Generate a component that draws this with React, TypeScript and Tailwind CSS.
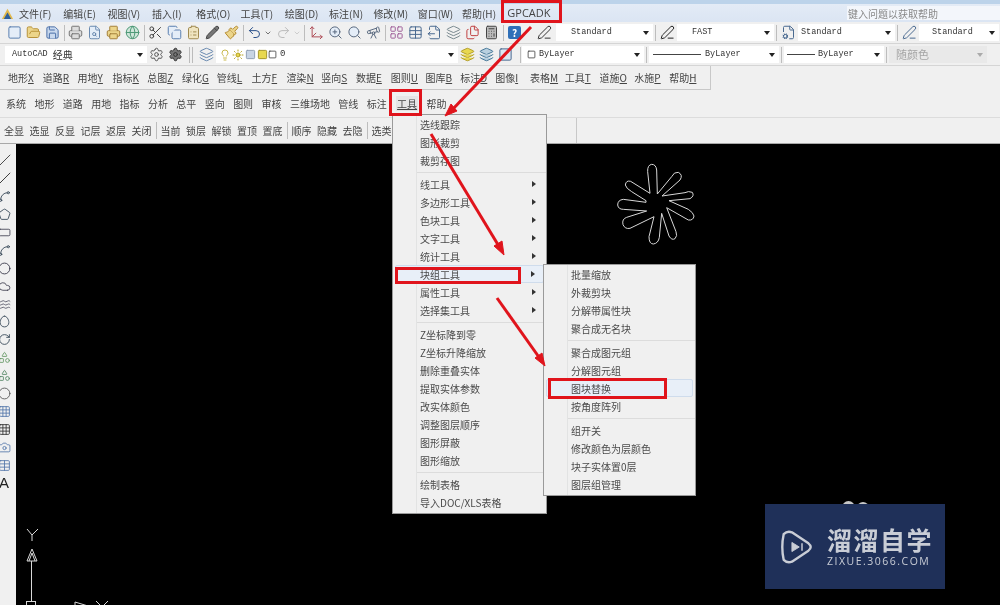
import {
  ChevronDown,
  Square,
  FolderOpen,
  Save,
  Printer,
  FileSearch,
  Globe,
  Scissors,
  Copy,
  ClipboardList,
  Pencil,
  Paintbrush,
  Undo2,
  Redo2,
  Move3d,
  ZoomIn,
  Search,
  Telescope,
  LayoutGrid,
  Table,
  FileOutput,
  Layers,
  Files,
  Calculator,
  Settings,
  Printer as Plot,
  Lightbulb,
  Sun,
  PenLine,
  FileCog,
  Slash,
  Spline,
  Pentagon,
  RectangleHorizontal,
  Circle,
  Cloud,
  Waves,
  Egg,
  Shapes,
  Grid3x3,
  Camera,
  RotateCw,
  type LucideIcon,
} from 'lucide-react';

const cjk = "font-['Noto_Sans_CJK_SC','Noto_Sans',sans-serif]";
const mono = "font-['Liberation_Mono','Noto_Sans_CJK_SC',monospace]";

const topMenu = ['文件(F)', '编辑(E)', '视图(V)', '插入(I)', '格式(O)', '工具(T)', '绘图(D)', '标注(N)', '修改(M)', '窗口(W)', '帮助(H)'];

const gpcad = [
  ['地形', 'X'], ['道路', 'R'], ['用地', 'Y'], ['指标', 'K'], ['总图', 'Z'], ['绿化', 'G'], ['管线', 'L'],
  ['土方', 'F'], ['渲染', 'N'], ['竖向', 'S'], ['数据', 'E'], ['图则', 'U'], ['图库', 'B'], ['标注', 'D'],
  ['图像', 'I'], ['表格', 'M'], ['工具', 'T'], ['道施', 'O'], ['水施', 'P'], ['帮助', 'H'],
];

const sysMenu = ['系统', '地形', '道路', '用地', '指标', '分析', '总平', '竖向', '图则', '审核', '三维场地', '管线', '标注'];

const layerGroups = [
  ['全显', '选显', '反显', '记层', '返层', '关闭'],
  ['当前', '锁层', '解锁', '置顶', '置底'],
  ['顺序', '隐藏', '去隐'],
  ['选类'],
];

type Item = { label: string; arrow?: boolean; active?: boolean };
type Entry = Item | 'sep';

const toolsMenu: Entry[] = [
  { label: '选线跟踪' }, { label: '图形裁剪' }, { label: '裁剪存图' }, 'sep',
  { label: '线工具', arrow: true }, { label: '多边形工具', arrow: true }, { label: '色块工具', arrow: true },
  { label: '文字工具', arrow: true }, { label: '统计工具', arrow: true }, { label: '块组工具', arrow: true, active: true },
  { label: '属性工具', arrow: true }, { label: '选择集工具', arrow: true }, 'sep',
  { label: 'Z坐标降到零' }, { label: 'Z坐标升降缩放' }, { label: '删除重叠实体' }, { label: '提取实体参数' },
  { label: '改实体颜色' }, { label: '调整图层顺序' }, { label: '图形屏蔽' }, { label: '图形缩放' }, 'sep',
  { label: '绘制表格' }, { label: '导入DOC/XLS表格' },
];

const blockMenu: Entry[] = [
  { label: '批量缩放' }, { label: '外裁剪块' }, { label: '分解带属性块' }, { label: '聚合成无名块' }, 'sep',
  { label: '聚合成图元组' }, { label: '分解图元组' }, { label: '图块替换', active: true }, { label: '按角度阵列' }, 'sep',
  { label: '组开关' }, { label: '修改颜色为层颜色' }, { label: '块子实体置0层' }, { label: '图层组管理' },
];

const drawTools: [LucideIcon, string][] = [
  [Slash, 'text-[#333]'], [Slash, 'text-[#222]'], [Spline, 'text-[#345]'], [Pentagon, 'text-[#345]'],
  [RectangleHorizontal, 'text-[#445]'], [Spline, 'text-[#345]'], [Circle, 'text-[#334]'], [Cloud, 'text-[#445]'],
  [Waves, 'text-[#556]'], [Egg, 'text-[#345]'], [RotateCw, 'text-[#345]'], [Shapes, 'text-[#696]'],
  [Shapes, 'text-[#586]'], [Circle, 'text-[#555]'], [Grid3x3, 'text-[#57a]'], [Grid3x3, 'text-[#333]'],
  [Camera, 'text-[#57a]'], [Table, 'text-[#57a]'],
];

function Tool({ icon: Icon, className }: { icon: LucideIcon; className: string }) {
  return (
    <div className="w-[19px] h-[20px] flex items-center justify-center shrink-0">
      <Icon size={15} strokeWidth={1.6} className={className} />
    </div>
  );
}

function Sep({ className = 'h-[16px] mx-[1.5px]' }: { className?: string }) {
  return <div className={`w-px bg-[#bdbdbd] shrink-0 ${className}`} />;
}

function Combo({ className, children, dark = true }: { className: string; children?: React.ReactNode; dark?: boolean }) {
  return (
    <div className={`h-[17px] bg-white flex items-center shrink-0 ${className}`}>
      <div className="flex-1 min-w-0 flex items-center overflow-hidden">{children}</div>
      <div className={`w-0 h-0 mr-[4px] border-x-[3.5px] border-x-transparent border-t-[4px] ${dark ? 'border-t-[#222]' : 'border-t-[#aaa]'}`} />
    </div>
  );
}

function MenuList({ items, className }: { items: Entry[]; className: string }) {
  return (
    <div className={`absolute z-10 bg-[#f0f0f0] border border-[#9a9a9a] pb-[2px] ${className}`}>
      <div className="absolute top-0 bottom-0 left-[23px] w-px bg-[#e2e3e3]" />
      {items.map((item, i) =>
        item === 'sep' ? (
          <div key={i} className="h-[6px] flex items-center pl-[24px]">
            <div className="h-px w-full bg-[#dcdcdc]" />
          </div>
        ) : (
          <div
            key={i}
            className={`relative h-[18px] mx-[2px] pl-[25px] pr-[8px] flex items-center justify-between text-[10px] text-[#4a4a4a] ${
              item.active ? 'bg-[#e8eff8] border border-[#cfdcec] rounded-[2px]' : ''
            }`}
          >
            <span className={item.active ? 'ml-[-1px]' : ''}>{item.label}</span>
            {item.arrow && <span className="w-0 h-0 border-y-[3.5px] border-y-transparent border-l-[4px] border-l-[#333]" />}
          </div>
        ),
      )}
    </div>
  );
}

export default function App() {
  return (
    <div className={`relative w-[1000px] h-[605px] overflow-hidden bg-[#f0f0f0] blur-[0.35px] ${cjk}`}>
      {/* Title strip */}
      <div className="h-[4px] bg-[#bcd3ea]" />

      {/* Menu bar */}
      <div className="h-[18px] flex items-center bg-gradient-to-b from-[#e3ebf6] to-[#dbe5f3] text-[10px] text-[#444]">
        <div className="w-[19px] shrink-0 pl-[1px]">
          <svg viewBox="0 0 14 14" className="w-[13px] h-[13px]">
            <path d="M1 13 L7 2 L13 13 Z" fill="#e3b94a" />
            <path d="M3 13 L7 6 L11 13 Z" fill="#2f5f9a" />
          </svg>
        </div>
        <div className="flex">
          {topMenu.map((m) => (
            <span key={m} className="w-[44.3px] shrink-0 whitespace-nowrap">{m}</span>
          ))}
        </div>
        <span className="ml-[1px] text-[11px] font-['Open_Sans',sans-serif] text-[#444]">GPCADK</span>
        <div className="ml-auto w-[153px] h-[14px] bg-[#f3f6fb] flex items-center pl-[1px] text-[#888]">键入问题以获取帮助</div>
      </div>

      {/* Standard toolbar */}
      <div className="h-[22px] flex items-center pl-[5px] border-b border-[#d5d5d5]">
        <Tool icon={Square} className="text-[#5a7fb0] fill-[#e4edf8]" />
        <Tool icon={FolderOpen} className="text-[#b8923a] fill-[#ecd58a]" />
        <Tool icon={Save} className="text-[#4a6fa8] fill-[#c9d9ee]" />
        <Sep />
        <Tool icon={Printer} className="text-[#777] fill-[#ddd]" />
        <Tool icon={FileSearch} className="text-[#6a8ab0] fill-[#e4edf8]" />
        <Tool icon={Plot} className="text-[#a5803a] fill-[#ecd58a]" />
        <Tool icon={Globe} className="text-[#4f9a78] fill-[#cfe6da]" />
        <Sep />
        <Tool icon={Scissors} className="text-[#444]" />
        <Tool icon={Copy} className="text-[#5a7fb0] fill-[#e4edf8]" />
        <Tool icon={ClipboardList} className="text-[#a08a50] fill-[#efe4c0]" />
        <Tool icon={Pencil} className="text-[#444] fill-[#777]" />
        <Tool icon={Paintbrush} className="text-[#b58a30] fill-[#ecd58a]" />
        <Sep />
        <Tool icon={Undo2} className="text-[#2a4f8a]" />
        <ChevronDown size={8} className="w-[8px] text-[#333] shrink-0" />
        <div className="w-[2px] shrink-0" />
        <Tool icon={Redo2} className="text-[#bbb]" />
        <ChevronDown size={8} className="w-[8px] text-[#bbb] shrink-0" />
        <Sep className="h-[16px] mx-[2.5px]" />
        <Tool icon={Move3d} className="text-[#b0505a]" />
        <Tool icon={ZoomIn} className="text-[#5a6a80] fill-[#e4edf8]" />
        <Tool icon={Search} className="text-[#5a6a80] fill-[#e4edf8]" />
        <Tool icon={Telescope} className="text-[#5a6a80]" />
        <Sep />
        <Tool icon={LayoutGrid} className="text-[#a0609a]" />
        <Tool icon={Table} className="text-[#4a6a90]" />
        <Tool icon={FileOutput} className="text-[#4a6a90]" />
        <Tool icon={Layers} className="text-[#7a8a90]" />
        <Tool icon={Files} className="text-[#c04040]" />
        <Tool icon={Calculator} className="text-[#444] fill-[#bbb]" />
        <Sep />
        <div className="w-[19px] flex justify-center shrink-0">
          <div className="w-[13px] h-[13px] rounded-[2px] bg-[#2f6fb8] flex items-center justify-center text-[10px] font-bold text-white leading-none">?</div>
        </div>
        <div className="w-[11px] shrink-0" />

        <Tool icon={PenLine} className="text-[#333]" />
        <Combo className="w-[97px] ml-[2px]">
          <span className={`${mono} text-[8.5px] text-[#333] pl-[15px]`}>Standard</span>
        </Combo>
        <Sep className="h-[16px] mx-[2px]" />
        <Tool icon={PenLine} className="text-[#222]" />
        <Combo className="w-[97px]">
          <span className={`${mono} text-[8.5px] text-[#333] pl-[15px]`}>FAST</span>
        </Combo>
        <Sep className="h-[16px] mx-[2px]" />
        <Tool icon={FileCog} className="text-[#4a6a90]" />
        <Combo className="w-[97px]">
          <span className={`${mono} text-[8.5px] text-[#333] pl-[3px]`}>Standard</span>
        </Combo>
        <Sep className="h-[16px] mx-[2px]" />
        <Tool icon={PenLine} className="text-[#4a6a90]" />
        <Combo className="w-[80px]">
          <span className={`${mono} text-[8.5px] text-[#333] pl-[13px]`}>Standard</span>
        </Combo>
      </div>

      {/* Workspace and properties */}
      <div className="h-[22px] flex items-center pl-[5px] border-b border-[#d5d5d5]">
        <Combo className="w-[142px]">
          <span className={`${mono} text-[8.5px] text-[#333] pl-[7px]`}>AutoCAD</span>
          <span className="text-[10px] text-[#333] ml-[5px]">经典</span>
        </Combo>
        <Tool icon={Settings} className="text-[#555]" />
        <Tool icon={Settings} className="text-[#333] fill-[#777]" />
        <div className="w-[4px] h-[16px] border-x border-[#bbb] mx-[4px] shrink-0" />
        <Tool icon={Layers} className="text-[#6a8ab0]" />
        <Combo className="w-[242px]">
          <Lightbulb size={12} className="ml-[3px] text-[#c9b84a] shrink-0" />
          <Sun size={12} className="text-[#b5a020] fill-[#e8d850] shrink-0 ml-[1px]" />
          <Square size={11} className="text-[#8a9ab0] fill-[#c8d4e4] shrink-0 ml-[1px]" />
          <Square size={11} className="text-[#a09020] fill-[#e8d850] shrink-0 ml-[1px]" />
          <Square size={9} className="text-[#333] shrink-0" />
          <span className={`${mono} text-[9px] text-[#333] ml-[3px]`}>0</span>
        </Combo>
        <Tool icon={Layers} className="text-[#b5a030] fill-[#e8d850]" />
        <Tool icon={Layers} className="text-[#4a7a9a] fill-[#b8d0e0]" />
        <Tool icon={Square} className="text-[#4a6a90] fill-[#dce6f2]" />
        <div className="w-[4px] shrink-0" />
        <Sep className="h-[16px] mx-[1px]" />
        <Combo className="w-[122px]">
          <Square size={9} className="ml-[5px] text-[#333] shrink-0" />
          <span className={`${mono} text-[8.5px] text-[#333] ml-[3px]`}>ByLayer</span>
        </Combo>
        <Sep className="h-[16px] mx-[2px]" />
        <Combo className="w-[130px]">
          <div className="ml-[4px] w-[48px] h-px bg-[#444] shrink-0" />
          <span className={`${mono} text-[8.5px] text-[#333] ml-[4px]`}>ByLayer</span>
        </Combo>
        <Sep className="h-[16px] mx-[2px]" />
        <Combo className="w-[100px]">
          <div className="ml-[3px] w-[28px] h-px bg-[#444] shrink-0" />
          <span className={`${mono} text-[8.5px] text-[#333] ml-[3px]`}>ByLayer</span>
        </Combo>
        <Sep className="h-[16px] mx-[2px]" />
        <Combo className="w-[98px] !bg-[#e9e9e9]" dark={false}>
          <span className="text-[11px] text-[#a5a5a5] pl-[7px]">随颜色</span>
        </Combo>
      </div>

      {/* GPCAD main menu */}
      <div className="h-[24px] w-[711px] flex items-center pl-[8px] border-b border-r border-[#c8c8c8] text-[10px] text-[#444]">
        {gpcad.map(([name, key]) => (
          <span key={name + key} className="w-[34.8px] shrink-0 whitespace-nowrap">
            {name}
            <span className="underline">{key}</span>
          </span>
        ))}
      </div>

      {/* GPCAD sub menu */}
      <div className="h-[28px] flex items-center pl-[6px] gap-[8.4px] text-[10px] text-[#444] border-b border-[#dcdcdc]">
        {sysMenu.map((m) => (
          <span key={m}>{m}</span>
        ))}
        <span className="ml-[1px] bg-[#e5e5e5] px-[1px] underline">工具</span>
        <span>帮助</span>
      </div>

      {/* Layer tools */}
      <div className="h-[25px] w-[577px] flex items-center pl-[4px] text-[10px] text-[#444] border-r border-[#c8c8c8]">
        {layerGroups.map((group, i) => (
          <div key={i} className="flex items-center">
            {i > 0 && <Sep className="h-[17px] mx-[4px]" />}
            <div className="flex gap-[5.5px]">
              {group.map((m) => (
                <span key={m}>{m}</span>
              ))}
            </div>
          </div>
        ))}
      </div>

      {/* Drawing area */}
      <div className="flex h-[462px] border-t border-[#a8a8a8]">
        <div className="w-[16px] shrink-0 overflow-hidden pt-[8px] flex flex-col items-start">
          {drawTools.map(([Icon, color], i) => (
            <div key={i} className="h-[17.9px] w-[16px] flex items-center shrink-0">
              <Icon size={13} strokeWidth={1.6} className={`${color} ml-[-2px]`} />
            </div>
          ))}
          <span className="h-[18px] ml-[-1px] text-[15px] leading-[18px] text-[#222] font-['Liberation_Sans',sans-serif]">A</span>
        </div>
        <div className="relative flex-1 bg-black overflow-hidden">
          {/* Flower block on the canvas */}
          <svg viewBox="0 0 300 300" className="absolute left-[584px] top-[6px] w-[100px] h-[100px]" fill="none" stroke="#d8d8d8" strokeWidth="3">
            <path d="M172 132 L170 60 Q168 43 155 43 Q142 45 143 65 L150 130 L92 94 Q78 90 76 105 Q78 115 95 125 L138 152 L138 157 L70 148 Q53 150 53 165 Q55 178 70 178 L140 183 L80 202 Q65 207 69 224 Q75 238 90 235 L162 200 L147 260 Q147 282 160 282 Q175 280 178 262 L185 190 L207 258 Q215 272 225 266 Q233 258 228 245 L200 173 L265 210 Q280 212 282 198 Q280 188 265 178 L207 152 L270 146 Q284 138 277 127 Q265 122 255 128 L186 138 L240 90 Q250 75 235 67 Q222 65 215 80 Z" />
          </svg>
          {/* Partly hidden block behind the watermark */}
          <div className="absolute left-[826px] top-[357px] w-[13px] h-[7px] rounded-t-full bg-[#c8c8c8]" />
          <div className="absolute left-[841px] top-[358px] w-[12px] h-[6px] rounded-t-full bg-[#c8c8c8]" />
          {/* UCS icon */}
          <svg className="absolute left-0 top-[380px] w-[110px] h-[82px]" fill="none" stroke="#d8d8d8" strokeWidth="1">
            <path d="M11 5 L16 11 L22 5 M16 11 L16 17" />
            <path d="M16 25 L11 37 L21 37 Z M16 29 L13 37 M16 29 L19 37" />
            <path d="M15.5 37 L15.5 77" />
            <rect x="10.5" y="77.5" width="9" height="9" />
            <path d="M59 78 L72 82 M59 78 L59 86" />
            <path d="M80 77 L86 83 M92 77 L86 83" />
          </svg>
        </div>
      </div>

      {/* Tools drop-down */}
      <MenuList items={toolsMenu} className={`left-[392px] top-[114px] w-[155px] ${cjk}`} />
      {/* Block tools flyout */}
      <MenuList items={blockMenu} className={`left-[543px] top-[264px] w-[153px] ${cjk}`} />

      {/* Red annotations */}
      <div className="absolute z-20 left-[501px] top-0 w-[61px] h-[23px] border-[3px] border-[#e0141c]" />
      <div className="absolute z-20 left-[389px] top-[89px] w-[33px] h-[27px] border-[3px] border-[#e0141c]" />
      <div className="absolute z-20 left-[395px] top-[267px] w-[126px] h-[17px] border-[3px] border-[#e0141c]" />
      <div className="absolute z-20 left-[548px] top-[378px] w-[119px] h-[21px] border-[3px] border-[#e0141c]" />
      <svg className="absolute z-20 left-0 top-0 w-[1000px] h-[605px] pointer-events-none" fill="none" stroke="#e0141c" strokeWidth="3">
        <path d="M531 27 L452 110" />
        <path d="M445 116 L451 104 L457 111 Z" fill="#e0141c" strokeWidth="1" />
        <path d="M431 134 L500 248" />
        <path d="M504 255 L494 246 L502 241 Z" fill="#e0141c" strokeWidth="1" />
        <path d="M497 298 L541 360" />
        <path d="M545 366 L535 358 L542 353 Z" fill="#e0141c" strokeWidth="1" />
      </svg>

      {/* Watermark */}
      <div className="absolute z-30 left-[765px] top-[504px] w-[180px] h-[85px] bg-[#1f3059] flex items-center pl-[15px] text-[#c9cdd6]">
        <svg viewBox="0 0 36 38" className="w-[33px] h-[36px] shrink-0" fill="none" stroke="currentColor" strokeWidth="2.6" strokeLinejoin="round">
          <path d="M4 5 Q1 19 4 33 Q8 37 13 35 L31 23 Q36 19 31 15 L13 3 Q8 1 4 5 Z" />
          <path d="M13 14 L21 19 L13 24 Z" fill="currentColor" strokeWidth="1" />
          <path d="M24 15 L24 23" strokeWidth="1.6" />
        </svg>
        <div className="ml-[14px] flex flex-col gap-[3px]">
          <span className="text-[25px] leading-[26px] font-bold tracking-[1.5px] whitespace-nowrap">溜溜自学</span>
          <span className="text-[10.5px] leading-[12px] tracking-[1.5px] whitespace-nowrap font-['Open_Sans',sans-serif]">ZIXUE.3066.COM</span>
        </div>
      </div>
    </div>
  );
}
